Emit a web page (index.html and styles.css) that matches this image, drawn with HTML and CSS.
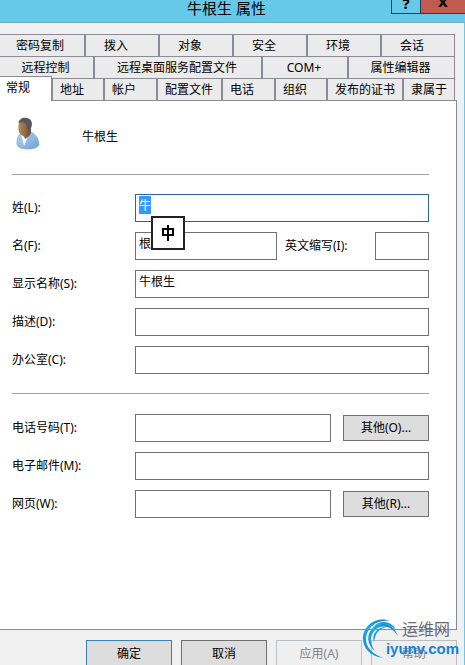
FILE: index.html
```
<!DOCTYPE html>
<html lang="zh-CN">
<head>
<meta charset="utf-8">
<meta name="viewport" content="width=device-width, initial-scale=1">
<title>牛根生 属性</title>
<link rel="stylesheet" href="styles.css">
</head>
<body>
<div class="dialog">
  <header class="titlebar">
    <h1 class="title">牛根生 属性</h1>
    <div class="window-controls">
      <button class="control help" type="button">?</button>
      <button class="control close" type="button" aria-label="关闭">
        <svg width="12" height="9" viewBox="0 0 12 9"><path d="M1 -2H4L6 1L8 -2H11L7.600 2.500L11 7H8L6 4.500L4 7H1L4.400 2.500Z" fill="#111"/></svg>
      </button>
    </div>
  </header>
  <main class="content">
    <div class="tabs" role="tablist">
      <div class="tab-row row-back">
        <button class="tab" role="tab">密码复制</button>
        <button class="tab" role="tab">拨入</button>
        <button class="tab" role="tab">对象</button>
        <button class="tab" role="tab">安全</button>
        <button class="tab" role="tab">环境</button>
        <button class="tab" role="tab">会话</button>
      </div>
      <div class="tab-row row-middle">
        <button class="tab" role="tab">远程控制</button>
        <button class="tab" role="tab">远程桌面服务配置文件</button>
        <button class="tab" role="tab">COM+</button>
        <button class="tab" role="tab">属性编辑器</button>
      </div>
      <div class="tab-row row-front">
        <button class="tab active" role="tab" aria-selected="true">常规</button>
        <button class="tab" role="tab">地址</button>
        <button class="tab" role="tab">帐户</button>
        <button class="tab" role="tab">配置文件</button>
        <button class="tab" role="tab">电话</button>
        <button class="tab" role="tab">组织</button>
        <button class="tab" role="tab">发布的证书</button>
        <button class="tab" role="tab">隶属于</button>
      </div>
    </div>
    <form class="panel" role="tabpanel">
      <div class="identity">
        <svg class="avatar" width="24" height="33" viewBox="0 0 24 33">
          <defs>
            <linearGradient id="shirt" x1="0" y1="0" x2="1" y2="1"><stop offset="0" stop-color="#b9d9f3"/><stop offset="1" stop-color="#6b9fd2"/></linearGradient>
            <linearGradient id="skin" x1="0" y1="0" x2="1" y2="0"><stop offset="0" stop-color="#b98a5e"/><stop offset="1" stop-color="#704a2c"/></linearGradient>
          </defs>
          <path d="M1 25C1 20 3 17 7 15L15 15C19 17 23 21 23 28C21 31 17 32 12 32C6 32 0 31 1 25Z" fill="url(#shirt)" stroke="#7ba2c8" stroke-width=".6"/>
          <path d="M5 17L8 29L11 22L9 18Z" fill="#f7fbff"/>
          <path d="M3 5C2 9 2 14 4 17C6 19 8 18 9 22C12 20 15 18 15 15L14 5Z" fill="url(#skin)"/>
          <path d="M2.500 6C3 2 7 0 11 1C16 2 17 7 15 11L14 14L12 14C12 11 11 9 10 7C8 5 5 5 2.500 6Z" fill="#55575a"/>
        </svg>
        <span>牛根生</span>
      </div>
      <div class="fields">
        <div class="field">
          <label for="surname">姓(L):</label>
          <div class="entry">
            <input id="surname" class="box" type="text" value="牛">
            <span class="ime" aria-hidden="true"><svg width="14" height="18" viewBox="0 0 14 18"><path d="M2 5H12V11H2ZM7 1V17" fill="none" stroke="#000" stroke-width="2"/></svg></span>
          </div>
        </div>
        <div class="field">
          <label for="given">名(F):</label>
          <div class="entry">
            <input id="given" class="box" type="text" value="根">
            <label class="initials-label" for="initials">英文缩写(I):</label>
            <input id="initials" class="box initials" type="text">
          </div>
        </div>
        <div class="field">
          <label for="display">显示名称(S):</label>
          <div class="entry"><input id="display" class="box" type="text" value="牛根生"></div>
        </div>
        <div class="field">
          <label for="description">描述(D):</label>
          <div class="entry"><input id="description" class="box" type="text"></div>
        </div>
        <div class="field">
          <label for="office">办公室(C):</label>
          <div class="entry"><input id="office" class="box" type="text"></div>
        </div>
      </div>
      <div class="fields">
        <div class="field">
          <label for="phone">电话号码(T):</label>
          <div class="entry"><input id="phone" class="box" type="text"><button class="button" type="button">其他(O)...</button></div>
        </div>
        <div class="field">
          <label for="email">电子邮件(M):</label>
          <div class="entry"><input id="email" class="box" type="text"></div>
        </div>
        <div class="field">
          <label for="web">网页(W):</label>
          <div class="entry"><input id="web" class="box" type="text"><button class="button" type="button">其他(R)...</button></div>
        </div>
      </div>
    </form>
    <footer class="actions">
      <button class="button default" type="button">确定</button>
      <button class="button" type="button">取消</button>
      <button class="button" type="button" disabled>应用(A)</button>
      <button class="button" type="button" disabled>帮助</button>
      <div class="watermark">
        <svg width="38" height="42" viewBox="0 0 38 42">
          <defs><linearGradient id="swirl" x1="0" y1="1" x2="1" y2="0"><stop offset="0" stop-color="#0f86d6"/><stop offset=".5" stop-color="#1badec"/><stop offset="1" stop-color="#1c6db0"/></linearGradient></defs>
          <g fill="url(#swirl)">
            <path d="M21 40C7 38 0 29 1 18C3 5 16-2 29 3C16 1 6 8 4 19C3 29 10 36 21 40Z"/>
            <path d="M14 34C6 28 4 19 9 12C16 2 31 4 36 18C29 7 18 6 12 13C7 20 8 27 14 34Z"/>
            <path d="M11 9C18 1 30 3 34 12C27 5 19 4 11 9Z"/>
            <path d="M12 24C9 15 17 8 25 9C18 10 13 15 12 24Z"/>
          </g>
        </svg>
        <div class="brand"><span class="brand-name">运维网</span><span class="brand-site">iyunv.com</span></div>
      </div>
    </footer>
  </main>
</div>
<script src="script.js"></script>
</body>
</html>
```
FILE: styles.css
```
* { box-sizing: border-box; }

body {
  margin: 0;
  height: 100vh;
  overflow: hidden;
  background: #f0f0f0;
  color: #000;
  font: 12px/18px "Noto Sans", "Noto Sans CJK SC", sans-serif;
}

button, input { font: inherit; color: inherit; margin: 0; }

.dialog { min-height: 100vh; display: flex; flex-direction: column; }

.titlebar {
  display: grid;
  grid-template-columns: 1fr auto 1fr;
  height: 23px;
  background: #66c9ea;
  border-bottom: 1px solid #74adc6;
}

.title {
  grid-column: 2;
  margin: 0;
  padding-right: 12px;
  font-size: 15px;
  line-height: 16px;
  font-weight: 400;
}

.window-controls {
  display: flex;
  justify-content: flex-end;
  align-items: flex-start;
}

.control {
  height: 14px;
  padding: 0;
  border: solid #273b44;
  border-width: 0 0 1px 1px;
  background: transparent;
  overflow: hidden;
}

.help { width: 29px; padding-bottom: 6px; font-size: 15px; font-weight: 700; line-height: 7px; }
.close { width: 45px; padding-bottom: 4px; background: #c35a50; display: flex; justify-content: center; }

.content {
  flex: 1;
  padding: 11px 7px 0 0;
  border-right: 1px solid #66c9ea;
}

.tabs { padding-right: 2px; }
.tab-row { display: grid; height: 22px; }
.row-back { grid-template-columns: 85fr 74fr 74fr 74fr 74fr 74fr; }
.row-middle { grid-template-columns: 94fr 168fr 86fr 107fr; }
.row-front { grid-template-columns: 52fr 52fr 53fr 65fr 53fr 52fr 76fr 52fr; }

.tab {
  min-width: 0;
  padding: 0;
  border: 1px solid #898c95;
  border-bottom: 0;
  background: #ebebeb;
  white-space: nowrap;
}

.tab:first-child { border-left: 0; }
.row-back .tab { padding-right: 12px; }
.row-back .tab:first-child { padding-right: 4px; }
.row-middle .tab { padding-right: 2px; }
.row-front .tab { padding-left: 7px; text-align: left; }

.row-front .tab.active {
  position: relative;
  margin: -2px 0 -1px;
  padding: 0 6px 2px;
  background: #fff;
}

.panel {
  padding: 16px 27px 111px 12px;
  border: 1px solid #898c95;
  border-left: 0;
  background: #fff;
}

.identity {
  display: flex;
  align-items: center;
  gap: 42px;
  height: 40px;
  padding-left: 4px;
}

.avatar { flex: none; align-self: flex-start; }

.fields {
  display: grid;
  grid-template-columns: minmax(0, 1fr);
  gap: 10px;
  margin-top: 17px;
  padding-top: 19px;
  border-top: 1px solid #a0a0a0;
}

.fields + .fields { margin-top: 19px; padding-top: 20px; }

.field {
  display: grid;
  grid-template-columns: 123px minmax(0, 1fr);
  align-items: center;
}

.entry { display: flex; align-items: center; position: relative; }

.box {
  flex: 1;
  min-width: 0;
  height: 28px;
  padding: 1px 3px 7px;
  border: 1px solid #707070;
  border-radius: 0;
  outline: 0;
  background: #fff;
}

.box:focus { border-color: #2b6596; }
.box::selection { background: #39f; color: #fff; }

.initials-label { width: 98px; padding-left: 8px; }
.initials { flex: none; width: 54px; }

.ime {
  position: absolute;
  z-index: 1;
  left: 16px;
  top: 22px;
  width: 34px;
  height: 34px;
  display: flex;
  align-items: center;
  justify-content: center;
  border: 2px solid #222;
  background: #fff;
}

.button {
  width: 86px;
  height: 26px;
  padding: 0;
  border: 1px solid #707070;
  background: #ddd;
}

.entry .button { margin-left: 12px; }
.actions .button { height: 28px; }
.button.default { border-color: #3a80b5; }
.button:disabled { background: #efefef; border-color: #bcbfc2; color: #838383; }

.actions {
  display: flex;
  justify-content: flex-end;
  gap: 9px;
  padding-top: 10px;
  position: relative;
}

.watermark {
  position: absolute;
  right: -2px;
  top: -12px;
  display: flex;
  pointer-events: none;
}

.brand { display: flex; flex-direction: column; margin-left: -14px; }
.brand-name { padding-left: 16px; font-size: 16px; line-height: 22px; color: #666b73; }
.brand-site { font: 700 15px/18px "Liberation Sans", sans-serif; color: #1681d8; }
```
FILE: script.js
```
const surname = document.getElementById("surname");
surname.focus();
surname.select();
```
